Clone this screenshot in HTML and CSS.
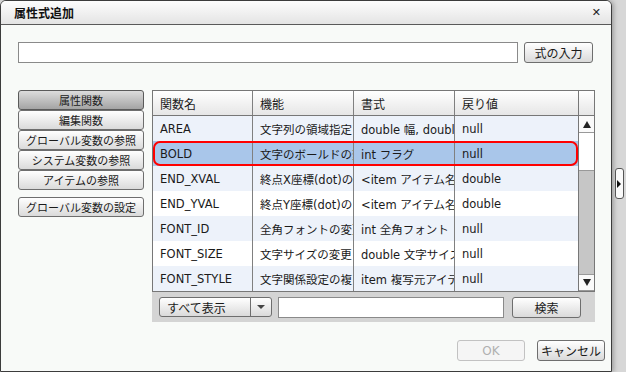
FILE: index.html
```html
<!DOCTYPE html>
<html lang="ja">
<head>
    <meta charset="UTF-8">
    <title>属性式追加</title>
    <link rel="stylesheet" href="styles.css">
</head>
<body>
    <div class="dialog">
        <div class="titlebar">
            <span class="title">属性式追加</span>
            <span class="close">✕</span>
        </div>

        <div class="dialog-body">
            <div class="formula-row">
                <input type="text" class="formula-input">
                <button class="btn formula-btn">式の入力</button>
            </div>

            <div class="main">
                <div class="side-menu">
                    <div class="menu-group">
                        <button class="btn menu-btn pressed">属性関数</button>
                        <button class="btn menu-btn">編集関数</button>
                        <button class="btn menu-btn">グローバル変数の参照</button>
                        <button class="btn menu-btn">システム変数の参照</button>
                        <button class="btn menu-btn">アイテムの参照</button>
                    </div>
                    <button class="btn menu-btn">グローバル変数の設定</button>
                </div>

                <div class="panel">
                    <div class="grid">
                        <div class="grid-head">
                            <div class="cell c1">関数名</div>
                            <div class="cell c2">機能</div>
                            <div class="cell c3">書式</div>
                            <div class="cell c4">戻り値</div>
                            <div class="corner"></div>
                        </div>
                        <div class="grid-main">
                            <div class="rows">
                                <div class="row alt">
                                    <div class="cell c1">AREA</div>
                                    <div class="cell c2">文字列の領域指定</div>
                                    <div class="cell c3">double 幅, doubl</div>
                                    <div class="cell c4">null</div>
                                </div>
                                <div class="row selected">
                                    <div class="cell c1">BOLD</div>
                                    <div class="cell c2">文字のボールドの変</div>
                                    <div class="cell c3">int フラグ</div>
                                    <div class="cell c4">null</div>
                                </div>
                                <div class="row alt">
                                    <div class="cell c1">END_XVAL</div>
                                    <div class="cell c2">終点X座標(dot)の</div>
                                    <div class="cell c3">&lt;item アイテム名</div>
                                    <div class="cell c4">double</div>
                                </div>
                                <div class="row">
                                    <div class="cell c1">END_YVAL</div>
                                    <div class="cell c2">終点Y座標(dot)の</div>
                                    <div class="cell c3">&lt;item アイテム名</div>
                                    <div class="cell c4">double</div>
                                </div>
                                <div class="row alt">
                                    <div class="cell c1">FONT_ID</div>
                                    <div class="cell c2">全角フォントの変更</div>
                                    <div class="cell c3">int 全角フォント</div>
                                    <div class="cell c4">null</div>
                                </div>
                                <div class="row">
                                    <div class="cell c1">FONT_SIZE</div>
                                    <div class="cell c2">文字サイズの変更</div>
                                    <div class="cell c3">double 文字サイズ</div>
                                    <div class="cell c4">null</div>
                                </div>
                                <div class="row alt">
                                    <div class="cell c1">FONT_STYLE</div>
                                    <div class="cell c2">文字関係設定の複</div>
                                    <div class="cell c3">item 複写元アイテ</div>
                                    <div class="cell c4">null</div>
                                </div>
                            </div>
                            <div class="vscroll">
                                <div class="sb-btn"><span class="arrow-up"></span></div>
                                <div class="sb-thumb"></div>
                                <div class="sb-track"></div>
                                <div class="sb-btn"><span class="arrow-down"></span></div>
                            </div>
                        </div>
                    </div>

                    <div class="toolbar">
                        <div class="combo">
                            <span class="combo-text">すべて表示</span>
                            <span class="combo-arrow"><span class="arrow-small"></span></span>
                        </div>
                        <input type="text" class="search-input">
                        <button class="btn search-btn">検索</button>
                    </div>
                </div>
            </div>
        </div>

        <div class="footer">
            <button class="btn foot-btn" disabled>OK</button>
            <button class="btn foot-btn">キャンセル</button>
        </div>
    </div>

    <div class="side">
        <div class="side-tab"><span class="arrow-right"></span></div>
    </div>
</body>
</html>
```

FILE: styles.css
```css
body {
    margin: 0;
    width: 626px;
    height: 372px;
    overflow: hidden;
    display: flex;
    background-color: #d7d7d7;
    font-family: "DejaVu Sans", "Noto Sans CJK JP", sans-serif;
    font-size: 12px;
    color: #1a1a1a;
}
.dialog {
    width: 612px;
    height: 372px;
    box-sizing: border-box;
    border: 1px solid #3c3c3c;
    border-radius: 6px 6px 0 0;
    background-color: #f8faf8;
    display: flex;
    flex-direction: column;
    box-shadow: 2px 0 4px rgba(0, 0, 0, 0.25);
}
.titlebar {
    height: 23px;
    border-bottom: 1px solid #5a5a5a;
    border-radius: 5px 5px 0 0;
    background: linear-gradient(#fdfdfd, #e4e4e4);
    display: flex;
    align-items: center;
    justify-content: space-between;
    padding: 0 10px 0 13px;
}
.title {
    font-size: 12px;
    font-weight: bold;
    color: #111;
}
.close {
    font-size: 11px;
    font-weight: bold;
    color: #222;
}
.dialog-body {
    padding: 17px 17px 0 17px;
}
.formula-row {
    display: flex;
    gap: 6px;
    height: 21px;
}
.formula-input {
    width: 500px;
    height: 21px;
    box-sizing: border-box;
    border: 1px solid #8a8a8a;
    background: #fff;
    margin: 0;
}
.btn {
    font-family: "DejaVu Sans", "Noto Sans CJK JP", sans-serif;
    font-size: 12px;
    color: #1a1a1a;
    border: 1px solid #6e6e6e;
    border-radius: 3px;
    background: linear-gradient(#ffffff, #dadada);
    padding: 0;
    margin: 0;
    box-sizing: border-box;
}
.formula-btn {
    width: 69px;
    height: 21px;
}
.main {
    display: flex;
    gap: 8px;
    margin-top: 27px;
}
.side-menu {
    width: 126px;
    display: flex;
    flex-direction: column;
    gap: 7px;
}
.menu-group {
    display: flex;
    flex-direction: column;
}
.menu-btn {
    width: 126px;
    height: 20px;
    font-size: 11px;
    white-space: nowrap;
    overflow: hidden;
}
.menu-btn.pressed {
    background: linear-gradient(#dcdcdc, #a4a4a4);
    border-color: #5a5a5a;
}
.panel {
    width: 443px;
    background-color: #d4d4d4;
}
.grid {
    border: 1px solid #777;
    background-color: #fff;
}
.grid-head {
    display: flex;
    height: 24px;
    border-bottom: 1px solid #777;
    background: linear-gradient(#ffffff, #e6e6e6);
}
.cell {
    box-sizing: border-box;
    padding-left: 7px;
    white-space: nowrap;
    overflow: hidden;
    display: flex;
    align-items: center;
    border-right: 1px solid #808080;
}
.c1 { width: 100px; }
.c2 { width: 101px; }
.c3 { width: 101px; }
.c4 { width: 123px; border-right: none; }
.corner {
    width: 16px;
    border-left: 1px solid #777;
    box-sizing: border-box;
}
.grid-main {
    display: flex;
}
.rows {
    width: 425px;
    font-size: 11.5px;
}
.row {
    display: flex;
    height: 25px;
    background-color: #ffffff;
    position: relative;
}
.row.alt {
    background-color: #edf2fa;
}
.row.selected {
    background-color: #a9c6ea;
}
.row.selected::after {
    content: "";
    position: absolute;
    inset: 0 0 0 0;
    border: 2px solid #f00;
    border-radius: 7px;
}
.vscroll {
    width: 16px;
    box-sizing: border-box;
    border-left: 1px solid #777;
    display: flex;
    flex-direction: column;
    background-color: #c6c6c6;
}
.sb-btn {
    height: 17px;
    background: #fafafa;
    border-top: 1px solid #999;
    border-bottom: 1px solid #999;
    box-sizing: border-box;
    display: flex;
    align-items: center;
    justify-content: center;
}
.sb-btn:first-child {
    border-top: none;
}
.sb-thumb {
    height: 38px;
    background: #fff;
    border-bottom: 1px solid #999;
    box-sizing: border-box;
}
.sb-track {
    flex: 1;
}
.arrow-up, .arrow-down {
    width: 0;
    height: 0;
    border-left: 4px solid transparent;
    border-right: 4px solid transparent;
}
.arrow-up {
    border-bottom: 7px solid #222;
}
.arrow-down {
    border-top: 7px solid #222;
}
.toolbar {
    height: 30px;
    display: flex;
    align-items: center;
    padding-left: 7px;
}
.combo {
    width: 113px;
    height: 20px;
    box-sizing: border-box;
    border: 1px solid #6e6e6e;
    border-radius: 3px;
    background: linear-gradient(#ffffff, #dadada);
    display: flex;
}
.combo-text {
    flex: 1;
    padding-left: 7px;
    display: flex;
    align-items: center;
}
.combo-arrow {
    width: 20px;
    border-left: 1px solid #6e6e6e;
    display: flex;
    align-items: center;
    justify-content: center;
}
.arrow-small {
    width: 0;
    height: 0;
    border-left: 4px solid transparent;
    border-right: 4px solid transparent;
    border-top: 4px solid #444;
}
.search-input {
    width: 226px;
    height: 21px;
    box-sizing: border-box;
    border: 1px solid #8a8a8a;
    background: #fff;
    margin: 0 0 0 6px;
}
.search-btn {
    width: 69px;
    height: 21px;
    margin-left: 8px;
}
.footer {
    margin-top: auto;
    display: flex;
    justify-content: flex-end;
    gap: 12px;
    padding: 0 6px 10px 0;
}
.foot-btn {
    width: 68px;
    height: 21px;
}
.foot-btn:disabled {
    color: #b0b0b0;
    border-color: #c2c2c2;
    background: #f5f5f5;
}
.side {
    flex: 1;
    display: flex;
    flex-direction: column;
    align-items: center;
    padding-top: 168px;
}
.side-tab {
    width: 9px;
    height: 31px;
    box-sizing: border-box;
    border: 1px solid #555;
    border-radius: 3px;
    background: #fafafa;
    display: flex;
    align-items: center;
    justify-content: center;
}
.arrow-right {
    width: 0;
    height: 0;
    border-top: 4px solid transparent;
    border-bottom: 4px solid transparent;
    border-left: 4px solid #111;
}
```
